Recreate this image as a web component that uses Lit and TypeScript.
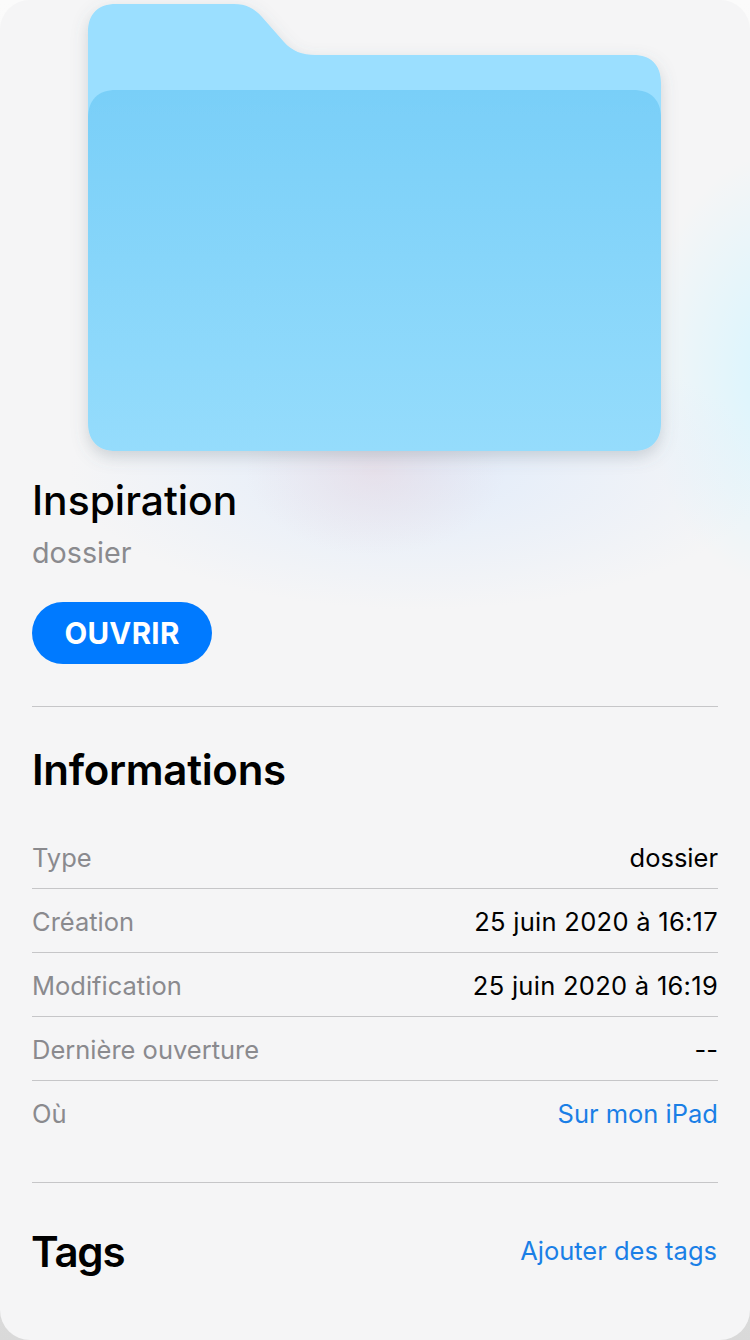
import { css, html, LitElement, svg } from 'lit';
import { customElement } from 'lit/decorators.js';

const ROWS = [
  { label: 'Type', value: 'dossier' },
  { label: 'Création', value: '25 juin 2020 à 16:17', date: true },
  { label: 'Modification', value: '25 juin 2020 à 16:19', date: true },
  { label: 'Dernière ouverture', value: '--' },
  { label: 'Où', value: 'Sur mon iPad', link: true },
];

const folder = svg`
  <defs>
    <linearGradient id="front" x1="0" y1="0" x2="0" y2="1">
      <stop offset="0" stop-color="#79cff8" />
      <stop offset="1" stop-color="#95dcfc" />
    </linearGradient>
    <filter id="shadow" x="-10%" y="-10%" width="120%" height="125%">
      <feDropShadow dx="0" dy="6" stdDeviation="8" flood-color="#5a6a78" flood-opacity="0.26" />
    </filter>
  </defs>
  <g filter="url(#shadow)">
    <path
      fill="#9bdfff"
      d="M88 32 C88 14 98 4 116 4 H234 C246 4 254 8 262 17 L284 42 C292 51 302 55 316 55 H633 C651 55 661 65 661 83 V400 H88 Z"
    />
    <path
      fill="url(#front)"
      d="M88 118 C88 100 98 90 116 90 H633 C651 90 661 100 661 118 V423 C661 441 651 451 633 451 H116 C98 451 88 441 88 423 Z"
    />
  </g>
`;

@customElement('app-root')
export class AppRoot extends LitElement {
  static styles = css`
    :host {
      display: block;
      width: 750px;
      height: 1340px;
      overflow: hidden;
      background: linear-gradient(#fbfbfb, #f0f0f0 60%, #d9d9d9);
      font-family: Inter, 'Liberation Sans', sans-serif;
    }

    .card {
      box-sizing: border-box;
      height: 1340px;
      padding: 0 32px;
      border-radius: 30px;
      background-color: #f5f5f6;
      background-image:
        radial-gradient(ellipse 130px 85px at 375px 470px, rgba(232, 214, 222, 0.55), rgba(232, 214, 222, 0)),
        radial-gradient(ellipse 350px 140px at 420px 470px, rgba(226, 236, 250, 1), rgba(226, 236, 250, 0)),
        radial-gradient(ellipse 150px 220px at 790px 370px, rgba(214, 245, 255, 1), rgba(214, 245, 255, 0));
    }

    .folder {
      display: block;
      width: 750px;
      height: 476px;
      margin: 0 -32px;
      overflow: visible;
    }

    h1,
    h2,
    p {
      margin: 0;
    }

    .title {
      font-size: 40.8px;
      font-weight: 500;
      line-height: 48px;
      color: #000;
    }

    .kind {
      margin-top: 11px;
      font-size: 28.7px;
      font-weight: 400;
      line-height: 36px;
      color: #8a8a8e;
    }

    .open {
      display: block;
      width: 180px;
      height: 62px;
      margin-top: 31px;
      padding: 0;
      border: none;
      border-radius: 31px;
      background: #007aff;
      color: #fff;
      font: 700 29.5px Inter, 'Liberation Sans', sans-serif;
      letter-spacing: 0.3px;
    }

    .info {
      margin-top: 42px;
      padding-bottom: 37px;
      border-top: 1px solid #c6c6c8;
      border-bottom: 1px solid #c6c6c8;
    }

    .heading {
      font-size: 42px;
      font-weight: 600;
      line-height: 50px;
      letter-spacing: -0.3px;
      color: #000;
    }

    .info .heading {
      margin-top: 38px;
      margin-bottom: 30px;
    }

    .row {
      box-sizing: border-box;
      display: flex;
      justify-content: space-between;
      align-items: center;
      height: 64px;
      padding-top: 2px;
      font-size: 25.5px;
      border-bottom: 1px solid #c6c6c8;
    }

    .row:last-child {
      padding-top: 1px;
      border-bottom: none;
    }

    .label {
      color: #8a8a8e;
    }

    .value {
      color: #000;
    }

    .date {
      letter-spacing: 0.28px;
    }

    .link {
      color: #1a7fe6;
    }

    .tags {
      display: flex;
      justify-content: space-between;
      align-items: center;
      margin-top: 44px;
    }

    .tags .heading {
      margin-left: -1px;
      letter-spacing: -1.2px;
    }

    .add {
      margin: 0 1px 3px 0;
      font-size: 25.5px;
    }
  `;

  render() {
    return html`
      <div class="card">
        <svg class="folder" viewBox="0 0 750 476">${folder}</svg>
        <h1 class="title">Inspiration</h1>
        <p class="kind">dossier</p>
        <button class="open">OUVRIR</button>
        <section class="info">
          <h2 class="heading">Informations</h2>
          ${ROWS.map(
            (r) => html`
              <div class="row">
                <span class="label">${r.label}</span>
                <span class="${r.link ? 'link' : 'value'} ${r.date ? 'date' : ''}">${r.value}</span>
              </div>
            `,
          )}
        </section>
        <div class="tags">
          <h2 class="heading">Tags</h2>
          <span class="add link">Ajouter des tags</span>
        </div>
      </div>
    `;
  }
}
